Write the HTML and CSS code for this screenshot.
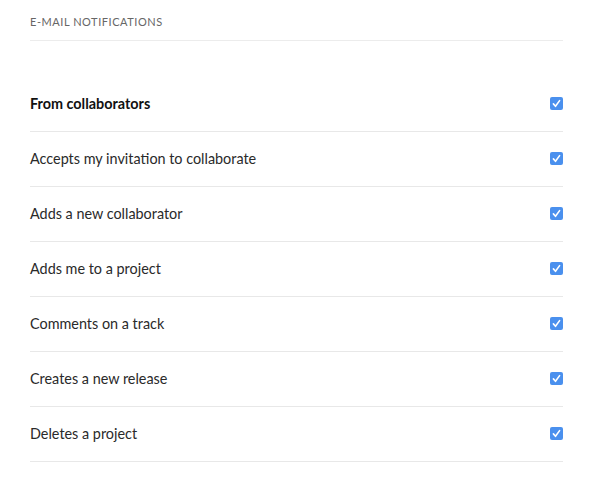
FILE: index.html
```html
<!DOCTYPE html>
<html>
<head>
<meta charset="utf-8">
<link rel="stylesheet" href="styles.css">
</head>
<body>
<section class="panel">
  <h2 class="heading">E-mail notifications</h2>
  <ul class="list">
    <li class="row row-title"><span class="label">From collaborators</span><span class="check"><svg viewBox="0 0 13 13" width="13" height="13"><rect x="0" y="0" width="13" height="13" rx="2" fill="#4a90ee"/><path d="M3.4 6.9 L5.5 9.3 L9.6 3.6" fill="none" stroke="#fff" stroke-width="1.6" stroke-linecap="round" stroke-linejoin="round"/></svg></span></li>
    <li class="row"><span class="label">Accepts my invitation to collaborate</span><span class="check"><svg viewBox="0 0 13 13" width="13" height="13"><rect x="0" y="0" width="13" height="13" rx="2" fill="#4a90ee"/><path d="M3.4 6.9 L5.5 9.3 L9.6 3.6" fill="none" stroke="#fff" stroke-width="1.6" stroke-linecap="round" stroke-linejoin="round"/></svg></span></li>
    <li class="row"><span class="label">Adds a new collaborator</span><span class="check"><svg viewBox="0 0 13 13" width="13" height="13"><rect x="0" y="0" width="13" height="13" rx="2" fill="#4a90ee"/><path d="M3.4 6.9 L5.5 9.3 L9.6 3.6" fill="none" stroke="#fff" stroke-width="1.6" stroke-linecap="round" stroke-linejoin="round"/></svg></span></li>
    <li class="row"><span class="label">Adds me to a project</span><span class="check"><svg viewBox="0 0 13 13" width="13" height="13"><rect x="0" y="0" width="13" height="13" rx="2" fill="#4a90ee"/><path d="M3.4 6.9 L5.5 9.3 L9.6 3.6" fill="none" stroke="#fff" stroke-width="1.6" stroke-linecap="round" stroke-linejoin="round"/></svg></span></li>
    <li class="row"><span class="label">Comments on a track</span><span class="check"><svg viewBox="0 0 13 13" width="13" height="13"><rect x="0" y="0" width="13" height="13" rx="2" fill="#4a90ee"/><path d="M3.4 6.9 L5.5 9.3 L9.6 3.6" fill="none" stroke="#fff" stroke-width="1.6" stroke-linecap="round" stroke-linejoin="round"/></svg></span></li>
    <li class="row"><span class="label">Creates a new release</span><span class="check"><svg viewBox="0 0 13 13" width="13" height="13"><rect x="0" y="0" width="13" height="13" rx="2" fill="#4a90ee"/><path d="M3.4 6.9 L5.5 9.3 L9.6 3.6" fill="none" stroke="#fff" stroke-width="1.6" stroke-linecap="round" stroke-linejoin="round"/></svg></span></li>
    <li class="row"><span class="label">Deletes a project</span><span class="check"><svg viewBox="0 0 13 13" width="13" height="13"><rect x="0" y="0" width="13" height="13" rx="2" fill="#4a90ee"/><path d="M3.4 6.9 L5.5 9.3 L9.6 3.6" fill="none" stroke="#fff" stroke-width="1.6" stroke-linecap="round" stroke-linejoin="round"/></svg></span></li>
  </ul>
</section>
</body>
</html>
```
FILE: styles.css
```css
html, body {
  margin: 0;
  padding: 0;
  background: #fff;
}
body {
  font-family: "Lato", "Noto Sans", sans-serif;
  color: #222;
}
.panel {
  padding: 0 37px 0 30px;
}
.heading {
  margin: 0;
  padding-top: 15px;
  box-sizing: border-box;
  height: 41px;
  font-size: 11px;
  font-weight: 400;
  letter-spacing: 0.55px;
  text-transform: uppercase;
  color: #666;
  line-height: 13px;
  border-bottom: 1px solid #ececec;
}
.list {
  list-style: none;
  margin: 36px 0 0 0;
  padding: 0;
}
.row {
  display: flex;
  align-items: center;
  justify-content: space-between;
  height: 55px;
  padding-bottom: 2px;
  box-sizing: border-box;
  border-bottom: 1px solid #e8e8e8;
  font-size: 14.4px;
  color: #2a2a2a;
}
.row-title .label {
  font-weight: 700;
  color: #111;
}
.check {
  display: flex;
  width: 13px;
  height: 13px;
}
```
